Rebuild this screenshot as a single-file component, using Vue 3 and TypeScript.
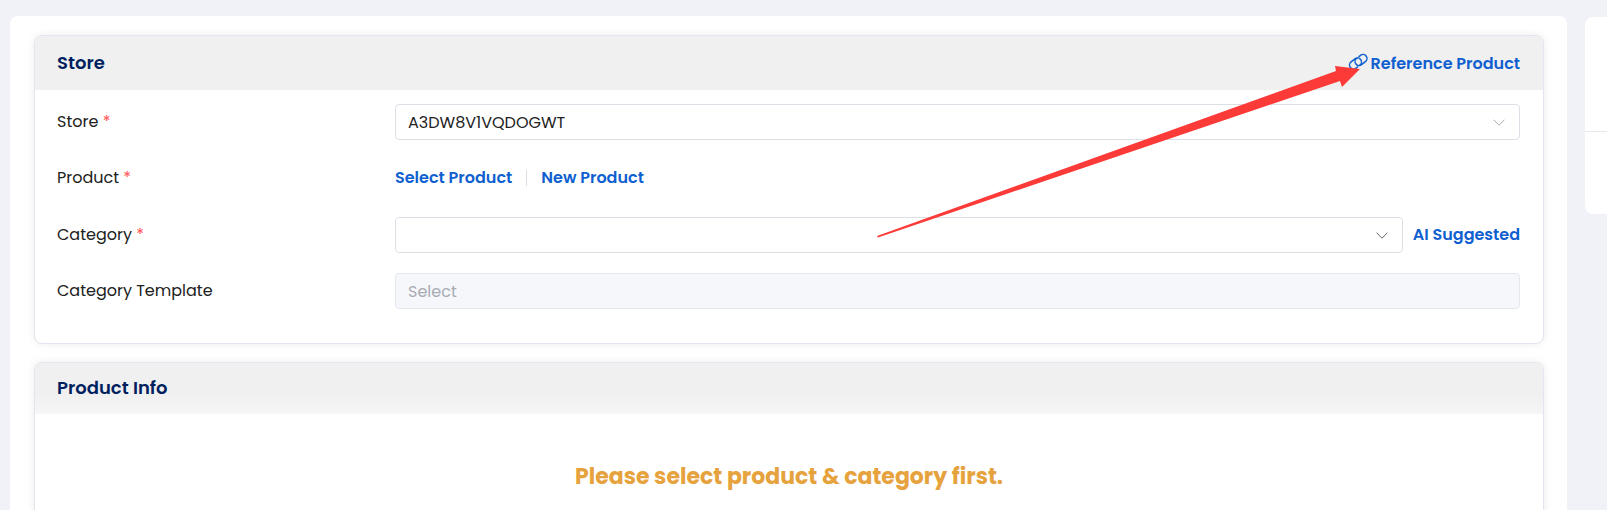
<script setup lang="ts">
import { ref } from 'vue'

const stores: string[] = ['A3DW8V1VQDOGWT']
const store = ref<string>(stores[0])
const category = ref<string>('')
const template = ref<string>('')
</script>

<template>
  <div class="page">
    <main class="panel">
      <section class="card">
        <header class="card-head">
          <h2>Store</h2>
          <a class="link reference" href="#reference">
            <svg class="chain" viewBox="0 0 20 18" aria-hidden="true">
              <g fill="none" stroke="currentColor" stroke-width="1.5" stroke-linecap="round">
                <rect x="-6.5" y="-4" width="13" height="8" rx="4" transform="translate(13 7) rotate(-38)" stroke-dasharray="32 2.5" stroke-dashoffset="-3" />
                <rect x="-6.5" y="-4" width="13" height="8" rx="4" transform="translate(7.5 10.5) rotate(142)" stroke-dasharray="32 2.5" stroke-dashoffset="-3" />
              </g>
            </svg>
            <span>Reference Product</span>
          </a>
        </header>

        <form class="form" @submit.prevent>
          <div class="row">
            <label for="store">Store <span class="required">*</span></label>
            <div class="select">
              <select id="store" v-model="store" required>
                <option v-for="name in stores" :key="name" :value="name">{{ name }}</option>
              </select>
              <svg class="chevron muted" viewBox="0 0 12 7" aria-hidden="true">
                <path d="M.5.7 6 6.2 11.5.7" />
              </svg>
            </div>
          </div>

          <div class="row links">
            <span id="product" class="label">Product <span class="required">*</span></span>
            <div class="actions" role="group" aria-labelledby="product">
              <button type="button" class="link">Select Product</button>
              <span class="divider"></span>
              <button type="button" class="link">New Product</button>
            </div>
          </div>

          <div class="row">
            <label for="category">Category <span class="required">*</span></label>
            <div class="with-action">
              <div class="select">
                <select id="category" v-model="category" required>
                  <option value=""></option>
                </select>
                <svg class="chevron" viewBox="0 0 12 7" aria-hidden="true">
                  <path d="M.5.7 6 6.2 11.5.7" />
                </svg>
              </div>
              <button type="button" class="link">AI Suggested</button>
            </div>
          </div>

          <div class="row">
            <label for="template">Category Template</label>
            <div class="select">
              <select id="template" v-model="template" disabled>
                <option value="">Select</option>
              </select>
            </div>
          </div>
        </form>
      </section>

      <section class="card">
        <header class="card-head faded">
          <h2>Product Info</h2>
        </header>
        <p class="notice">Please select product &amp; category first.</p>
      </section>
    </main>

    <aside class="side">
      <div class="side-top"></div>
      <div class="side-bottom"></div>
    </aside>

    <svg class="arrow" viewBox="0 0 484 173" aria-hidden="true">
      <path d="M0 171 459 6 458 1 483 4 465 22 463 16 1 172.5Z" />
    </svg>
  </div>
</template>

<style>
body {
  margin: 0;
  background: #f0f2f8;
}
</style>

<style scoped>
.page {
  position: relative;
  display: grid;
  grid-template-columns: minmax(0, 1fr) 22px;
  column-gap: 18px;
  align-items: start;
  height: 100vh;
  padding: 16px 0 0 10px;
  box-sizing: border-box;
  overflow: hidden;
  font-family: Poppins, Inter, sans-serif;
  font-size: 16px;
  line-height: 24px;
  color: #212121;
}

.panel {
  display: flex;
  flex-direction: column;
  gap: 18px;
  min-height: 100vh;
  padding: 19px 23px 0 24px;
  box-sizing: border-box;
  border-radius: 8px;
  background: #fff;
}

.card {
  overflow: hidden;
  border: 1px solid #e4e5ee;
  border-radius: 8px;
  background: #fff;
  box-shadow: 0 0 8px rgba(0, 0, 0, 0.08);
}

.card-head {
  display: flex;
  align-items: center;
  justify-content: space-between;
  height: 54px;
  padding: 0 23px 0 22px;
  background: #f0f0f0;
}

.card-head.faded {
  height: 49px;
  padding-bottom: 2px;
  background: linear-gradient(#f0f0f0 60%, #f6f6f6);
}

h2 {
  margin: 0;
  font-size: 18px;
  font-weight: 600;
  color: #001f5f;
}

.link {
  padding: 0;
  border: 0;
  background: none;
  font: inherit;
  font-weight: 600;
  color: #0f5fd0;
  text-decoration: none;
  white-space: nowrap;
  cursor: pointer;
}

.reference {
  display: flex;
  align-items: center;
  gap: 3px;
  padding-top: 2px;
}

.chain {
  width: 20px;
  height: 18px;
  padding-bottom: 4px;
}

.form {
  display: grid;
  row-gap: 20px;
  padding: 14px 23px 34px 22px;
}

.row {
  display: grid;
  grid-template-columns: 338px minmax(0, 1fr);
  align-items: center;
  min-height: 36px;
}

.row.links {
  padding-bottom: 1px;
}

.required {
  color: #ff4d4f;
}

.actions,
.with-action {
  display: flex;
  align-items: center;
}

.with-action {
  gap: 10px;
}

.divider {
  width: 1px;
  height: 16px;
  margin: 0 14px;
  background: #dcdfe6;
}

.select {
  position: relative;
  flex: 1;
}

select {
  display: block;
  width: 100%;
  height: 36px;
  padding: 2px 36px 0 12px;
  border: 1px solid #dcdfe6;
  border-radius: 4px;
  background: #fff;
  font: inherit;
  color: #212121;
  appearance: none;
}

select:disabled {
  border-color: #e4e7ed;
  background: #f5f7fb;
  color: #a8abb2;
  opacity: 1;
}

.chevron {
  position: absolute;
  top: 15px;
  right: 15px;
  width: 12px;
  height: 7px;
  fill: none;
  stroke: #606266;
  pointer-events: none;
}

.chevron.muted {
  stroke: #a8abb2;
}

.notice {
  margin: 0;
  padding: 49px 0;
  font-size: 22px;
  font-weight: 700;
  line-height: 28px;
  text-align: center;
  color: #e6a23c;
}

.side {
  margin-top: 1px;
  border-radius: 8px 0 0 8px;
  background: #fff;
}

.side-top {
  height: 114px;
  border-bottom: 1px solid #e4e7ed;
}

.side-bottom {
  height: 82px;
}

.arrow {
  position: absolute;
  top: 65px;
  left: 877px;
  width: 484px;
  height: 173px;
  fill: #fc3a38;
  pointer-events: none;
}
</style>
